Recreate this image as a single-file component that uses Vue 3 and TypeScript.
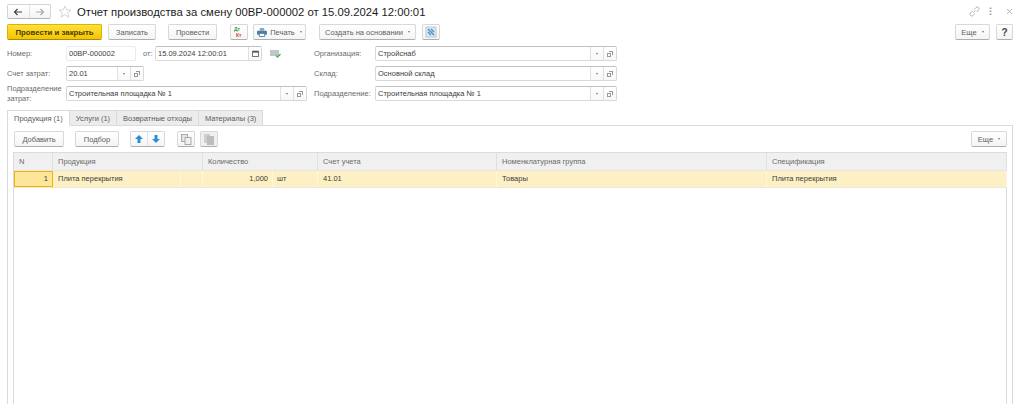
<script setup lang="ts">
interface Col { title: string; value: string; width: number; align?: string }
const cols: Col[] = [
  { title: 'N', value: '1', width: 39, align: 'right' },
  { title: 'Продукция', value: 'Плита перекрытия', width: 150 },
  { title: 'Количество', value: '1,000', width: 115 },
  { title: 'Счет учета', value: '41.01', width: 179 },
  { title: 'Номенклатурная группа', value: 'Товары', width: 270 },
  { title: 'Спецификация', value: 'Плита перекрытия', width: 240 },
]
const tabs = ['Продукция (1)', 'Услуги (1)', 'Возвратные отходы', 'Материалы (3)']
</script>

<template>
  <div class="page">
    <header class="title-row">
      <div class="nav">
        <button class="nav-btn">
          <svg width="10" height="8" viewBox="0 0 10 8"><path d="M9 4H2M4.500 1L1.500 4l3 3" fill="none" stroke="#444" stroke-width="1.200"/></svg>
        </button>
        <button class="nav-btn">
          <svg width="10" height="8" viewBox="0 0 10 8"><path d="M1 4h7M5.500 1l3 3-3 3" fill="none" stroke="#aaa" stroke-width="1.200"/></svg>
        </button>
      </div>
      <svg class="star" width="14" height="14" viewBox="0 0 14 14"><path d="M7 1l1.800 4h4.200l-3.400 2.700 1.300 4.500L7 9.600l-3.900 2.600 1.300-4.500L1 5h4.200z" fill="#fff" stroke="#d4d4d4"/></svg>
      <h1 class="title">Отчет производства за смену 00ВР-000002 от 15.09.2024 12:00:01</h1>
      <div class="win-icons">
        <svg width="11" height="11" viewBox="0 0 11 11"><path d="M4.500 6.500l2-2M3.500 5L1.500 7a1.500 1.500 0 0 0 2.500 2.500l2-2M7.500 6l2-2A1.500 1.500 0 0 0 7 1.500L5 3.500" fill="none" stroke="#b4b4b4"/></svg>
        <svg width="3" height="9" viewBox="0 0 3 9"><path d="M.5 .5h2v1.500h-2zM.5 3.500h2V5h-2zM.5 6.500h2V8h-2z" fill="#aaa"/></svg>
        <svg width="7" height="7" viewBox="0 0 7 7"><path d="M1 1l5 5M6 1L1 6" stroke="#b4b4b4" fill="none"/></svg>
      </div>
    </header>

    <div class="toolbar">
      <button class="btn primary w95">Провести и закрыть</button>
      <button class="btn w48">Записать</button>
      <button class="btn w49 ml6">Провести</button>
      <button class="btn icon w18 ml7">
        <svg width="12" height="12" viewBox="0 0 12 12"><text x="1" y="5" class="dt">Дт</text><text x="3" y="11" class="kt">Кт</text></svg>
      </button>
      <button class="btn w53 print">
        <svg width="10" height="9" viewBox="0 0 11 10"><path d="M3 0h5v3H3z" fill="#8aa7bc"/><rect x="0" y="3" width="11" height="4.500" rx="1" fill="#4a7ea3"/><path d="M2.500 6h6v3.500h-6z" fill="#fff" stroke="#4a7ea3"/></svg>
        <span>Печать</span><i class="caret" />
      </button>
      <button class="btn w97 ml7">Создать на основании<i class="caret" /></button>
      <button class="btn icon w18">
        <svg width="12" height="12" viewBox="0 0 12 12"><rect x="1" y="1" width="10" height="10" fill="#d6e6f1" stroke="#b3cddf"/><path d="M3 3l6 6M3 6l3 3M6 3l3 3" stroke="#4c86ae" stroke-width="1.100"/></svg>
      </button>
      <div class="spacer" />
      <button class="btn w35">Еще<i class="caret" /></button>
      <button class="btn w17 help">?</button>
    </div>

    <section class="form">
      <div class="form-row r1">
        <label class="lab">Номер:</label>
        <div class="field w70 plain">00ВР-000002</div>
        <label class="lab ot">от:</label>
        <div class="field w107">
          <span class="val">15.09.2024 12:00:01</span>
          <span class="fbtn cal"><svg width="7" height="7" viewBox="0 0 8 8"><path d="M.5 1.500h7v6h-7z" fill="none" stroke="#555"/><path d="M.5 1h7v2h-7z" fill="#555"/></svg></span>
        </div>
        <svg class="stat" width="11" height="9" viewBox="0 0 11 9"><rect x="0" y="1" width="9" height="6" fill="#bcc6cc"/><path d="M6 6.500l1.500 1.500L10.500 5" stroke="#4caf50" stroke-width="1.400" fill="none"/></svg>
        <label class="lab right-lab">Организация:</label>
        <div class="field w242">
          <span class="val">Стройснаб</span>
          <span class="fbtn"><i class="caret" /></span><span class="fbtn"><i class="open" /></span>
        </div>
      </div>
      <div class="form-row r2">
        <label class="lab">Счет затрат:</label>
        <div class="field w78">
          <span class="val">20.01</span>
          <span class="fbtn"><i class="caret" /></span><span class="fbtn"><i class="open" /></span>
        </div>
        <div class="gap-mid" />
        <label class="lab right-lab">Склад:</label>
        <div class="field w242">
          <span class="val">Основной склад</span>
          <span class="fbtn"><i class="caret" /></span><span class="fbtn"><i class="open" /></span>
        </div>
      </div>
      <div class="form-row r3">
        <label class="lab two">Подразделение затрат:</label>
        <div class="field w241">
          <span class="val">Строительная площадка № 1</span>
          <span class="fbtn"><i class="caret" /></span><span class="fbtn"><i class="open" /></span>
        </div>
        <label class="lab dep">Подразделение:</label>
        <div class="field w242">
          <span class="val">Строительная площадка № 1</span>
          <span class="fbtn"><i class="caret" /></span><span class="fbtn"><i class="open" /></span>
        </div>
      </div>
    </section>

    <nav class="tabs">
      <div v-for="(t, i) in tabs" :key="t" class="tab" :class="{ active: i === 0 }">{{ t }}</div>
    </nav>

    <section class="panel">
      <div class="panel-bar">
        <button class="btn w50 first">Добавить</button>
        <button class="btn w44 ml11">Подбор</button>
        <div class="move ml11">
          <button class="mv"><svg width="8" height="8" viewBox="0 0 8 8"><path d="M4 0l4 4H5.500v4h-3V4H0z" fill="#2a8fd6"/></svg></button>
          <button class="mv"><svg width="8" height="8" viewBox="0 0 8 8"><path d="M4 8L0 4h2.500V0h3v4H8z" fill="#2a8fd6"/></svg></button>
        </div>
        <button class="btn icon w18 ml12">
          <svg width="11" height="11" viewBox="0 0 11 11"><rect x=".5" y=".5" width="6" height="7" fill="#e4e4e4" stroke="#aaa"/><rect x="4" y="3.500" width="6" height="7" fill="#f0f0f0" stroke="#aaa"/></svg>
        </button>
        <button class="btn icon w18 ml5 dim">
          <svg width="10" height="11" viewBox="0 0 10 11"><rect x="0" y="0" width="6" height="9" fill="#cdcdcd"/><rect x="3" y="2" width="7" height="9" fill="#bcbcbc"/></svg>
        </button>
        <div class="spacer" />
        <button class="btn w36">Еще<i class="caret" /></button>
      </div>

      <div class="table">
        <div class="thead">
          <div v-for="c in cols" :key="c.title" class="th" :style="{ width: c.width + 'px' }">{{ c.title }}</div>
        </div>
        <div class="trow">
          <div class="td num" :style="{ width: cols[0].width + 'px' }">1</div>
          <div class="td prod" :style="{ width: cols[1].width + 'px' }">Плита перекрытия</div>
          <div class="td qty" :style="{ width: cols[2].width + 'px' }">
            <span class="q">1,000</span><span class="u">шт</span>
          </div>
          <div class="td" :style="{ width: cols[3].width + 'px' }">41.01</div>
          <div class="td" :style="{ width: cols[4].width + 'px' }">Товары</div>
          <div class="td" :style="{ width: cols[5].width + 'px' }">Плита перекрытия</div>
        </div>
      </div>
    </section>
  </div>
</template>

<style scoped>
.page {
  width: 1024px;
  height: 404px;
  overflow: hidden;
  box-sizing: border-box;
  padding: 4px 11px 0 7px;
  background: #fff;
  font-family: "Liberation Sans", Arial, sans-serif;
  font-size: 7.5px;
  color: #4b4b4b;
  display: flex;
  flex-direction: column;
}
button { font: inherit; color: inherit; padding: 0; margin: 0; cursor: pointer; }

.title-row { display: flex; align-items: center; height: 15px; }
.nav { display: flex; width: 44px; height: 15px; border: 1px solid #d4d4d4; border-bottom-color: #b5b5b5; border-radius: 2px; box-sizing: border-box; background: linear-gradient(#fff, #f3f3f3); }
.nav-btn { flex: 1; border: 0; background: none; display: flex; align-items: center; justify-content: center; }
.nav-btn + .nav-btn { border-left: 1px solid #e2e2e2; }
.star { margin-left: 7px; }
.title { margin: 0 0 0 5px; font-size: 11.3px; font-weight: 400; color: #1c1c1c; white-space: nowrap; }
.win-icons { margin-left: auto; display: flex; align-items: center; gap: 9px; margin-right: 0; }
.win-icons svg:last-child { margin-left: 5px; }

.toolbar { display: flex; align-items: center; gap: 6px; height: 16px; margin-top: 5px; }
.spacer { flex: 1; }
.btn {
  box-sizing: border-box; height: 15.500px; border: 1px solid #d8d8d8; border-bottom-color: #aeaeae; border-radius: 2px;
  background: linear-gradient(#fff, #f4f4f4); display: flex; align-items: center; justify-content: center; gap: 3px; white-space: nowrap; color: #5c5c5c; flex: none;
}
.primary { background: linear-gradient(#ffe13c, #f5c400); border-color: #dcb400; border-bottom-color: #a98a10; color: #4a3c00; font-weight: 700; font-size: 7.8px; }
.icon { padding: 0; }
.dim { background: #efefef; }
.w95 { width: 95px; } .w48 { width: 48px; } .w49 { width: 49px; } .w18 { width: 18px; } .w53 { width: 53px; }
.w97 { width: 97px; } .w35 { width: 35px; } .w17 { width: 17px; } .w50 { width: 50px; } .w44 { width: 44px; } .w36 { width: 36px; }
.ml5 { margin-left: 5px; } .ml6 { margin-left: 6px; } .ml7 { margin-left: 7px; } .ml11 { margin-left: 11px; } .ml12 { margin-left: 12px; }
.first { margin-left: 1px; }
.help { font-weight: 700; font-size: 10px; color: #444; }
.print { margin-left: -1px; }
.caret { display: inline-block; width: 0; height: 0; border: 1.500px solid transparent; border-top: 2px solid #777; border-bottom: 0; margin-left: 2px; }
.dt { font-size: 5px; font-weight: 700; fill: #3c9a3c; }
.kt { font-size: 5px; font-weight: 700; fill: #e0413a; }

.form { display: flex; flex-direction: column; margin-top: 6px; }
.form-row { display: flex; align-items: center; height: 15px; }
.r2 { margin-top: 5px; }
.r3 { margin-top: 5px; }
.lab { width: 59px; color: #6a6a6a; flex: none; }
.two { line-height: 10px; }
.ot { width: 12px; margin-left: 7px; }
.stat { margin-left: 8px; flex: none; }
.right-lab { width: 61px; }
.r1 .right-lab { margin-left: 33px; }
.gap-mid { width: 170px; flex: none; }
.dep { width: 61px; margin-left: 7px; white-space: nowrap; }
.field { box-sizing: border-box; height: 15px; border: 1px solid #d8d8d8; border-top-color: #c0c0c0; border-radius: 2px; display: flex; align-items: center; flex: none; color: #3d3d3d; background: #fff; }
.plain { padding-left: 2px; border-color: #ebebeb; }
.val { flex: 1; padding-left: 2px; white-space: nowrap; }
.fbtn { width: 12px; height: 13px; border-left: 1px solid #e0e0e0; display: flex; align-items: center; justify-content: center; background: linear-gradient(#fff, #f8f8f8); }
.fbtn .caret { margin: 0; }
.open { display: block; width: 6px; height: 6px; background:
  linear-gradient(#999, #999) 2px 0/4px 1px no-repeat,
  linear-gradient(#999, #999) 5px 0/1px 4px no-repeat,
  linear-gradient(#999, #999) 0 2px/4px 1px no-repeat,
  linear-gradient(#999, #999) 0 2px/1px 4px no-repeat,
  linear-gradient(#999, #999) 0 5px/4px 1px no-repeat,
  linear-gradient(#999, #999) 3px 2px/1px 4px no-repeat; }
.w70 { width: 70px; } .w107 { width: 107px; } .w242 { width: 242px; } .w78 { width: 78px; } .w241 { width: 241px; }

.tabs { display: flex; margin-top: 9px; height: 16px; position: relative; z-index: 1; flex: none; }
.tab { box-sizing: border-box; height: 16px; padding: 0 6px; display: flex; align-items: center; border: 1px solid #dadada; border-left: 0; background: #ececec; color: #5c5c5c; white-space: nowrap; }
.tab.active { background: #fff; border-left: 1px solid #dadada; border-bottom-color: #fff; }

.panel { flex: 1; min-height: 0; border: 1px solid #dadada; border-bottom: 0; margin-top: -1px; padding: 5px 5px 0 5px; display: flex; flex-direction: column; }
.panel-bar { display: flex; align-items: center; height: 16px; flex: none; }
.move { display: flex; height: 15.500px; width: 35px; border: 1px solid #d8d8d8; border-bottom-color: #aeaeae; border-radius: 2px; box-sizing: border-box; background: linear-gradient(#fff, #f4f4f4); flex: none; }
.mv { flex: 1; border: 0; background: none; display: flex; align-items: center; justify-content: center; }
.mv + .mv { border-left: 1px solid #e2e2e2; }

.table { flex: 1; margin-top: 5px; border: 1px solid #dcdcdc; border-bottom: 0; box-sizing: border-box; }
.thead { display: flex; height: 18px; box-sizing: border-box; background: #f0f0f0; border-bottom: 1px solid #e6e6e6; }
.th { box-sizing: border-box; padding-left: 5px; line-height: 17px; border-right: 1px solid #e0e0e0; color: #6a6a6a; flex: none; }
.trow { display: flex; height: 17px; box-sizing: border-box; background: #fdf0c4; border-bottom: 1px solid #eeeadb; }
.td { box-sizing: border-box; padding-left: 5px; line-height: 16px; border-right: 1px solid #fff6dc; color: #3d3d3d; flex: none; }
.num { text-align: right; padding-right: 4px; background: #fde59a; border: 1px solid #f0b400; line-height: 14px; }
.prod { background: linear-gradient(#fff6dc, #fff6dc) 127px 0 / 1px 100% no-repeat; }
.qty { display: flex; }
.q { width: 64px; padding-right: 4px; box-sizing: content-box; width: 60px; border-right: 1px solid #fff6dc; text-align: right; }
.u { margin-left: 4px; }
</style>
